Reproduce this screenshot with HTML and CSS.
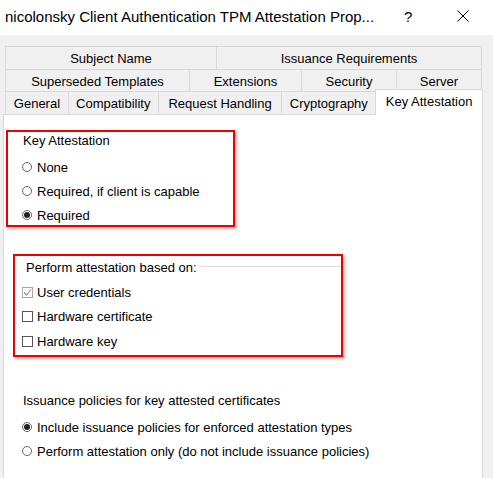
FILE: index.html
```html
<!DOCTYPE html>
<html>
<head>
<meta charset="utf-8">
<link rel="stylesheet" href="styles.css">
</head>
<body>
<div class="window">
  <div class="titlebar">
    <div class="title">nicolonsky Client Authentication TPM Attestation Prop...</div>
    <div class="help">?</div>
    <svg class="close" width="12" height="12" viewBox="0 0 12 12"><path d="M0.5 0.5 L11.5 11.5 M11.5 0.5 L0.5 11.5" stroke="#000" stroke-width="1" fill="none"/></svg>
  </div>
  <div class="body">
    <div class="tabs">
      <div class="tabrow r1">
        <div class="tab" style="width:212px">Subject Name</div>
        <div class="tab" style="width:266px">Issuance Requirements</div>
      </div>
      <div class="tabrow r2">
        <div class="tab" style="width:185px">Superseded Templates</div>
        <div class="tab" style="width:113px">Extensions</div>
        <div class="tab" style="width:96px">Security</div>
        <div class="tab" style="width:86px">Server</div>
      </div>
      <div class="tabrow r3">
        <div class="tab" style="width:64px">General</div>
        <div class="tab" style="width:91px">Compatibility</div>
        <div class="tab" style="width:125px">Request Handling</div>
        <div class="tab" style="width:95px">Cryptography</div>
        <div class="tab selected" style="width:108px">Key Attestation</div>
      </div>
    </div>
    <div class="panel">
      <div class="box box1">
        <div class="label">Key Attestation</div>
        <div class="opts">
          <div class="opt"><span class="radio"></span>None</div>
          <div class="opt"><span class="radio"></span>Required, if client is capable</div>
          <div class="opt"><span class="radio on"></span>Required</div>
        </div>
      </div>
      <div class="box box2">
        <div class="legend"><span>Perform attestation based on:</span><span class="gline"></span></div>
        <div class="opt chk"><span class="check dis"><svg width="9" height="9" viewBox="0 0 9 9"><path d="M1 4.5 L3.5 7 L8 1.5" stroke="#8a8a8a" stroke-width="1.1" fill="none"/></svg></span>User credentials</div>
        <div class="opt chk"><span class="check"></span>Hardware certificate</div>
        <div class="opt chk"><span class="check"></span>Hardware key</div>
      </div>
      <div class="issuance">
        <div class="label">Issuance policies for key attested certificates</div>
        <div class="opts">
          <div class="opt"><span class="radio on"></span>Include issuance policies for enforced attestation types</div>
          <div class="opt"><span class="radio"></span>Perform attestation only (do not include issuance policies)</div>
        </div>
      </div>
    </div>
  </div>
</div>
</body>
</html>
```
FILE: styles.css
```css
html, body {
  margin: 0;
  padding: 0;
}
body {
  width: 493px;
  height: 478px;
  overflow: hidden;
  background: #f0f0f0;
  font-family: "Liberation Sans", Arial, sans-serif;
  font-size: 13px;
  color: #000;
}
.window {
  width: 493px;
  height: 478px;
  overflow: hidden;
}
.titlebar {
  height: 35px;
  background: #fff;
  display: flex;
  align-items: center;
}
.title {
  font-size: 15px;
  padding-left: 5px;
  width: 395px;
  white-space: nowrap;
  margin-top: -2px;
}
.help {
  font-size: 15px;
  width: 57px;
  padding-left: 4px;
  box-sizing: border-box;
  margin-top: -2px;
}
.close {
  margin-top: -3px;
}
.body {
  padding-top: 11px;
}
.tabs {
  margin-left: 5px;
  width: 478px;
}
.tabrow {
  display: flex;
}
.r1 { height: 23px; }
.r2 { height: 22px; }
.r3 { height: 23px; }
.tab {
  box-sizing: border-box;
  border: 1px solid #d9d9d9;
  border-bottom: none;
  margin-left: -1px;
  display: flex;
  align-items: center;
  justify-content: center;
  white-space: nowrap;
  padding-top: 1px;
}
.tab:first-child {
  margin-left: 0;
}
.tab.selected {
  background: #fff;
  height: 26px;
  margin-top: -2px;
  position: relative;
  z-index: 2;
  padding-top: 0;
  padding-bottom: 3px;
}
.panel {
  margin-left: 3px;
  width: 480px;
  height: 380px;
  box-sizing: border-box;
  border: 1px solid #d9d9d9;
  background: #fff;
}
.box {
  border: 2px solid #ee0000;
  box-sizing: border-box;
  box-shadow: 2px 2px 3px rgba(0, 0, 0, 0.28);
}
.box1 {
  margin: 15px 0 0 2px;
  width: 229px;
  height: 97px;
  padding-left: 14px;
}
.label {
  height: 18px;
  line-height: 18px;
  padding-left: 1px;
}
.opts {
  margin-top: 5px;
}
.opt {
  height: 24px;
  display: flex;
  align-items: center;
  white-space: nowrap;
}
.radio {
  width: 10px;
  height: 10px;
  box-sizing: border-box;
  border: 1px solid #666;
  border-radius: 50%;
  margin-right: 5px;
  display: flex;
  align-items: center;
  justify-content: center;
  flex: none;
}
.radio.on::after {
  content: "";
  width: 6px;
  height: 6px;
  border-radius: 50%;
  background: #222;
}
.box2 {
  margin: 27px 0 0 9px;
  width: 330px;
  height: 103px;
  padding-left: 7px;
}
.legend {
  height: 22px;
  display: flex;
  align-items: center;
  padding-left: 4px;
}
.gline {
  flex: 1;
  height: 1px;
  background: #dcdcdc;
  margin-left: 4px;
  margin-top: -1px;
}
.legend + .opt {
  margin-top: 2px;
}
.opt.chk {
  height: 24.5px;
}
.check {
  width: 11px;
  height: 11px;
  box-sizing: border-box;
  border: 1px solid #555;
  margin-right: 4px;
  flex: none;
  display: flex;
  align-items: center;
  justify-content: center;
}
.check.dis {
  border-color: #a8a8a8;
}
.issuance {
  margin-top: 35px;
  padding-left: 18px;
}
.issuance .label {
  padding-left: 1px;
}
```
